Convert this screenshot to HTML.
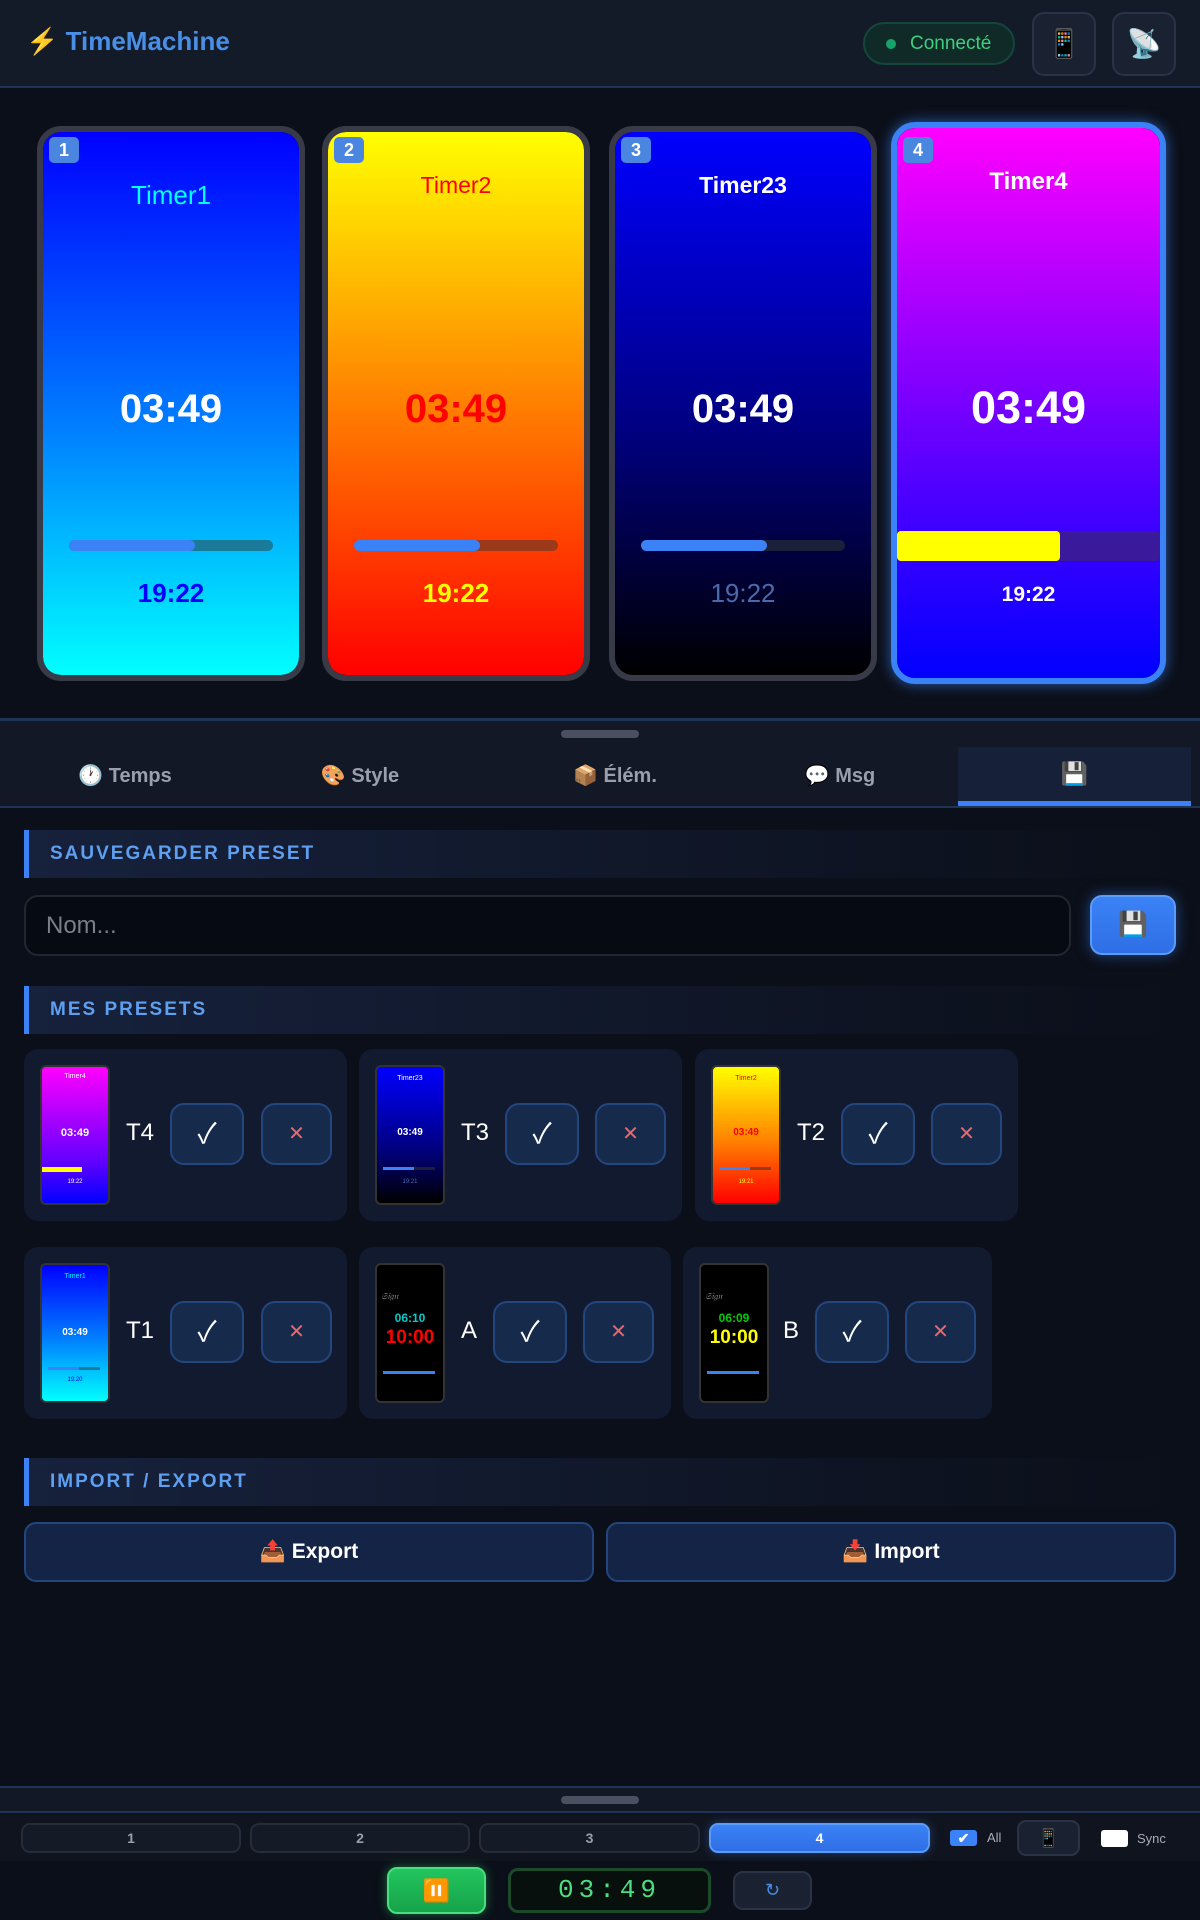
<!DOCTYPE html>
<html><head><meta charset="utf-8"><style>
*{box-sizing:border-box;margin:0;padding:0}
body{width:1200px;height:1920px;background:#0b0f19;font-family:"Liberation Sans","Noto Sans CJK JP",sans-serif;position:relative;overflow:hidden;color:#fff}
.a{position:absolute}
.hdr{left:0;top:0;width:1200px;height:88px;background:#131a28;border-bottom:2px solid #1e3356}
.logo{left:26px;top:26px;font-size:26px;font-weight:bold;color:#4a8fe6}
.pill{left:863px;top:22px;width:152px;height:43px;border-radius:22px;background:#0f2a27;border:2px solid #14463a;color:#3fcf7f;font-size:19px;line-height:39px;padding-left:45px}
.pill:before{content:"";position:absolute;left:21px;top:15px;width:10px;height:10px;border-radius:50%;background:#15a56a}
.hb{width:64px;height:64px;top:12px;border-radius:12px;background:#1a2232;border:2px solid #2a3346;font-size:28px;text-align:center;line-height:60px}
.card{border:6px solid #383a48;border-radius:24px;overflow:hidden}
.card .in{position:absolute;inset:0;border-radius:18px}
.badge{left:6px;top:5px;width:30px;height:26px;border-radius:5px;background:#4a86e0;font-size:18px;font-weight:bold;text-align:center;line-height:26px;color:#fff}
.ctx{left:0;width:100%;text-align:center;font-weight:bold}
.bar{left:26px;right:26px;height:11px;border-radius:6px}
.bar i{position:absolute;left:0;top:0;bottom:0;width:62%;background:#3b82f6;border-radius:6px}
.tabs{left:0;top:747px;width:1200px;height:61px;background:#121826;border-bottom:2px solid #1e3356}
.tab{top:747px;height:59px;line-height:59px;text-align:center;font-size:20px;font-weight:bold;color:#9aa0ab;width:240px}
.sh{left:24px;width:1152px;height:48px;border-left:5px solid #3b82f6;background:linear-gradient(90deg,#16213c,#0b0f19);color:#5e9ff0;font-size:19px;font-weight:bold;letter-spacing:2px;line-height:48px;padding-left:21px}
.pc{height:172px;background:#111a2e;border-radius:14px}
.th{left:16px;top:16px;width:70px;height:140px;border:2px solid #333;border-radius:6px;overflow:hidden}
.lb{top:70px;font-size:24px;color:#fff}
.ck,.xx{top:54px;height:62px;border-radius:14px;background:#162a4c;border:2px solid #24467e;text-align:center;line-height:58px;font-size:28px}
.xx{color:#f06565;font-size:20px}
.ie{top:1522px;height:60px;border-radius:12px;background:#142447;border:2px solid #24467e;text-align:center;line-height:56px;font-size:21px;font-weight:bold}
.nb{top:1823px;height:30px;border-radius:9px;background:#141a26;border:2px solid #252c3a;text-align:center;line-height:26px;color:#9aa0ab;font-size:14px;font-weight:bold}
</style></head><body>
<div class="a hdr"></div>
<div class="a logo">⚡ TimeMachine</div>
<div class="a pill">Connecté</div>
<div class="a hb" style="left:1032px">📱</div>
<div class="a hb" style="left:1112px">📡</div>

<div class="a card" style="left:37px;top:126px;width:268px;height:555px">
 <div class="in" style="background:linear-gradient(#0000ff,#0080ff 55%,#00ffff)"></div>
 <div class="a badge">1</div>
 <div class="a ctx" style="top:48px;font-size:26px;color:#00ffff;font-weight:normal">Timer1</div>
 <div class="a ctx" style="top:255px;font-size:40px">03:49</div>
 <div class="a bar" style="top:408px;background:#1a7a9a"><i></i></div>
 <div class="a ctx" style="top:446px;font-size:26px;color:#0000ff">19:22</div>
</div>
<div class="a card" style="left:322px;top:126px;width:268px;height:555px">
 <div class="in" style="background:linear-gradient(#ffff00,#ff8000 50%,#ff0000)"></div>
 <div class="a badge">2</div>
 <div class="a ctx" style="top:40px;font-size:23px;color:#ff0000;font-weight:normal">Timer2</div>
 <div class="a ctx" style="top:255px;font-size:40px;color:#ff0000">03:49</div>
 <div class="a bar" style="top:408px;background:#9a3a1a"><i></i></div>
 <div class="a ctx" style="top:446px;font-size:26px;color:#ffff00">19:22</div>
</div>
<div class="a card" style="left:609px;top:126px;width:268px;height:555px">
 <div class="in" style="background:linear-gradient(#0000ff,#000080 55%,#000000)"></div>
 <div class="a badge">3</div>
 <div class="a ctx" style="top:40px;font-size:23px;color:#fff">Timer23</div>
 <div class="a ctx" style="top:255px;font-size:40px">03:49</div>
 <div class="a bar" style="top:408px;background:#1a1f3a"><i></i></div>
 <div class="a ctx" style="top:446px;font-size:26px;color:#4a6aaa;font-weight:normal">19:22</div>
</div>
<div class="a card" style="left:891px;top:122px;width:275px;height:562px;border-color:#3b82f6;box-shadow:0 0 14px #3b82f6aa">
 <div class="in" style="background:linear-gradient(#ff00ff,#a000ff 35%,#5000ff 65%,#0000ff)"></div>
 <div class="a badge" style="top:9px">4</div>
 <div class="a ctx" style="top:40px;font-size:24px">Timer4</div>
 <div class="a ctx" style="top:254px;font-size:45px">03:49</div>
 <div class="a" style="left:0;right:0;top:403px;height:30px;background:#3a1a9a;border-radius:4px"><i style="position:absolute;left:0;top:0;bottom:0;width:62%;background:#ffff00;border-radius:4px"></i></div>
 <div class="a ctx" style="top:455px;font-size:21px">19:22</div>
</div>

<div class="a" style="left:0;top:718px;width:1200px;height:29px;background:#121826;border-top:3px solid #1e3356"></div>
<div class="a" style="left:561px;top:730px;width:78px;height:8px;border-radius:4px;background:#4a5060"></div>

<div class="a tabs"></div>
<div class="a tab" style="left:5px">🕐 Temps</div>
<div class="a tab" style="left:240px">🎨 Style</div>
<div class="a tab" style="left:495px">📦 Élém.</div>
<div class="a tab" style="left:720px">💬 Msg</div>
<div class="a" style="left:958px;top:747px;width:233px;height:59px;background:#162038;border-bottom:5px solid #3b82f6;text-align:center;line-height:54px;font-size:22px">💾</div>

<div class="a sh" style="top:830px">SAUVEGARDER PRESET</div>
<div class="a" style="left:24px;top:895px;width:1047px;height:61px;border-radius:14px;background:#060a13;border:2px solid #22262f;color:#7a7f88;font-size:24px;line-height:57px;padding-left:20px">Nom...</div>
<div class="a" style="left:1090px;top:895px;width:86px;height:60px;border-radius:12px;background:linear-gradient(#3b82f6,#2f6ee6);border:2px solid #5a9cf8;box-shadow:0 0 14px #3b82f680;text-align:center;line-height:56px;font-size:24px">💾</div>

<div class="a sh" style="top:986px">MES PRESETS</div>

<div class="a pc" style="left:24px;top:1049px;width:323px">
 <div class="a th" style="background:linear-gradient(#ff00ff,#6000ff 70%,#0000ff)"><div class="a" style="left:0;right:0;top:6px;text-align:center;font-size:7px">Timer4</div><div class="a" style="left:0;right:0;top:60px;text-align:center;font-size:11px;font-weight:bold">03:49</div><div class="a" style="left:0;width:40px;top:100px;height:5px;background:#ff0"></div><div class="a" style="left:0;right:0;top:112px;text-align:center;font-size:6px">19:22</div></div>
 <div class="a lb" style="left:102px">T4</div><div class="a ck" style="left:146px;width:74px">✓</div><div class="a xx" style="left:237px;width:71px">✕</div>
</div>
<div class="a pc" style="left:359px;top:1049px;width:323px">
 <div class="a th" style="background:linear-gradient(#0000ff,#000080 60%,#000)"><div class="a" style="left:0;right:0;top:8px;text-align:center;font-size:7px">Timer23</div><div class="a" style="left:0;right:0;top:60px;text-align:center;font-size:10px;font-weight:bold">03:49</div><div class="a" style="left:6px;width:52px;top:100px;height:3px;background:#1a1f3a"><i style="position:absolute;left:0;top:0;bottom:0;width:60%;background:#3b82f6"></i></div><div class="a" style="left:0;right:0;top:112px;text-align:center;font-size:6px;color:#4a6aaa">19:21</div></div>
 <div class="a lb" style="left:102px">T3</div><div class="a ck" style="left:146px;width:74px">✓</div><div class="a xx" style="left:236px;width:71px">✕</div>
</div>
<div class="a pc" style="left:695px;top:1049px;width:323px">
 <div class="a th" style="background:linear-gradient(#ff0,#ff8000 55%,#f00)"><div class="a" style="left:0;right:0;top:8px;text-align:center;font-size:7px;color:#f00">Timer2</div><div class="a" style="left:0;right:0;top:60px;text-align:center;font-size:10px;font-weight:bold;color:#f00">03:49</div><div class="a" style="left:6px;width:52px;top:100px;height:3px;background:#9a3a1a"><i style="position:absolute;left:0;top:0;bottom:0;width:60%;background:#3b82f6"></i></div><div class="a" style="left:0;right:0;top:112px;text-align:center;font-size:6px;color:#ff0">19:21</div></div>
 <div class="a lb" style="left:102px">T2</div><div class="a ck" style="left:146px;width:74px">✓</div><div class="a xx" style="left:236px;width:71px">✕</div>
</div>
<div class="a pc" style="left:24px;top:1247px;width:323px">
 <div class="a th" style="background:linear-gradient(#0000ff,#0080ff 55%,#0ff)"><div class="a" style="left:0;right:0;top:8px;text-align:center;font-size:7px;color:#0ff">Timer1</div><div class="a" style="left:0;right:0;top:62px;text-align:center;font-size:10px;font-weight:bold">03:49</div><div class="a" style="left:6px;width:52px;top:102px;height:3px;background:#1a7a9a"><i style="position:absolute;left:0;top:0;bottom:0;width:60%;background:#3b82f6"></i></div><div class="a" style="left:0;right:0;top:112px;text-align:center;font-size:6px;color:#00f">19:20</div></div>
 <div class="a lb" style="left:102px">T1</div><div class="a ck" style="left:146px;width:74px">✓</div><div class="a xx" style="left:237px;width:71px">✕</div>
</div>
<div class="a pc" style="left:359px;top:1247px;width:312px">
 <div class="a th" style="background:#000"><div class="a" style="left:4px;top:26px;font-size:9px;color:#888;font-style:italic">𝔖𝔦𝔤𝔫</div><div class="a" style="left:0;right:0;top:46px;text-align:center;font-size:12px;font-weight:bold;color:#0cc">06:10</div><div class="a" style="left:0;right:0;top:62px;text-align:center;font-size:19px;font-weight:bold;color:#f00">10:00</div><div class="a" style="left:6px;width:52px;top:106px;height:3px;background:#3b82f6"></div></div>
 <div class="a lb" style="left:102px">A</div><div class="a ck" style="left:134px;width:74px">✓</div><div class="a xx" style="left:224px;width:71px">✕</div>
</div>
<div class="a pc" style="left:683px;top:1247px;width:309px">
 <div class="a th" style="background:#000"><div class="a" style="left:4px;top:26px;font-size:9px;color:#888;font-style:italic">𝔖𝔦𝔤𝔫</div><div class="a" style="left:0;right:0;top:46px;text-align:center;font-size:12px;font-weight:bold;color:#0c0">06:09</div><div class="a" style="left:0;right:0;top:62px;text-align:center;font-size:19px;font-weight:bold;color:#ff0">10:00</div><div class="a" style="left:6px;width:52px;top:106px;height:3px;background:#3b82f6"></div></div>
 <div class="a lb" style="left:100px">B</div><div class="a ck" style="left:132px;width:74px">✓</div><div class="a xx" style="left:222px;width:71px">✕</div>
</div>

<div class="a sh" style="top:1458px">IMPORT / EXPORT</div>
<div class="a ie" style="left:24px;width:570px">📤 Export</div>
<div class="a ie" style="left:606px;width:570px">📥 Import</div>

<div class="a" style="left:0;top:1786px;width:1200px;height:27px;background:#121826;border-top:2px solid #1e3356;border-bottom:2px solid #1e3356"></div>
<div class="a" style="left:561px;top:1796px;width:78px;height:8px;border-radius:4px;background:#4a5060"></div>
<div class="a" style="left:0;top:1813px;width:1200px;height:48px;background:#10141e"></div>
<div class="a nb" style="left:21px;width:220px">1</div>
<div class="a nb" style="left:250px;width:220px">2</div>
<div class="a nb" style="left:479px;width:221px">3</div>
<div class="a nb" style="left:709px;width:221px;background:linear-gradient(#3b82f6,#2f6ee6);border-color:#5a9cf8;color:#fff;box-shadow:0 0 10px #3b82f660">4</div>
<div class="a" style="left:950px;top:1830px;width:27px;height:16px;border-radius:3px;background:#3b82f6;color:#fff;font-size:14px;line-height:16px;text-align:center;font-weight:bold">✔</div>
<div class="a" style="left:987px;top:1830px;font-size:13px;color:#aab">All</div>
<div class="a" style="left:1017px;top:1820px;width:63px;height:36px;border-radius:9px;background:#1a2232;border:2px solid #2a3346;text-align:center;line-height:32px;font-size:18px">📱</div>
<div class="a" style="left:1101px;top:1830px;width:27px;height:17px;border-radius:3px;background:#fff"></div>
<div class="a" style="left:1137px;top:1831px;font-size:13px;color:#aab">Sync</div>
<div class="a" style="left:387px;top:1867px;width:99px;height:47px;border-radius:10px;background:linear-gradient(#22c55e,#16a34a);border:2px solid #4ade80;box-shadow:0 0 10px #22c55e80;text-align:center;line-height:43px;font-size:22px">⏸️</div>
<div class="a" style="left:508px;top:1868px;width:203px;height:45px;border-radius:10px;background:#07100c;border:3px solid #1a4a2a;text-align:center;line-height:39px;font-size:26px;color:#4ade80;font-family:'Liberation Mono',monospace;letter-spacing:5px">03:49</div>
<div class="a" style="left:733px;top:1871px;width:79px;height:39px;border-radius:10px;background:#1a2232;border:2px solid #2a3346;text-align:center;line-height:35px;font-size:18px;color:#4a8fe6">↻</div>
</body></html>
